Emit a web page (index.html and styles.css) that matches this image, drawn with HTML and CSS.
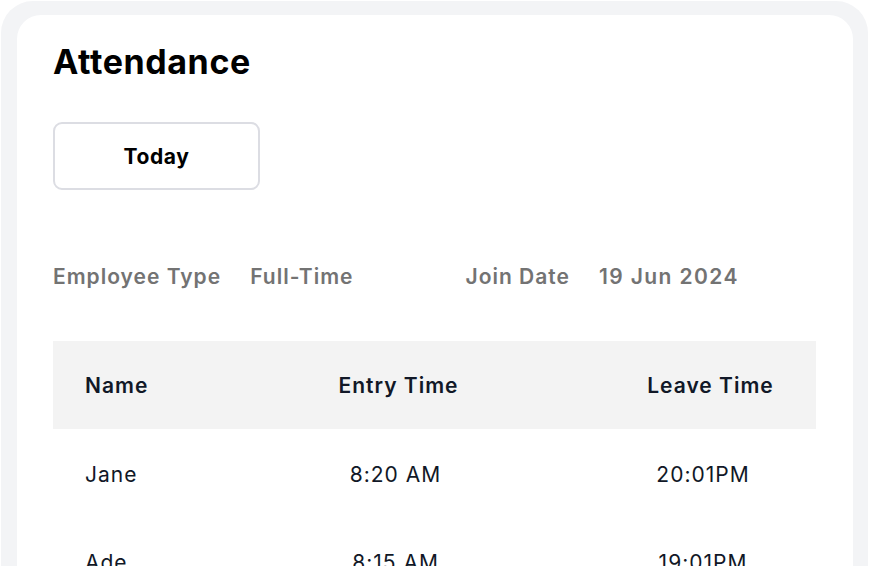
FILE: index.html
```html
<!DOCTYPE html>
<html>
<head>
<meta charset="utf-8">
<link rel="stylesheet" href="styles.css">
</head>
<body>
<div class="frame">
  <div class="card">
    <h1 class="title">Attendance</h1>
    <button class="tab">Today</button>
    <div class="info">
      <span class="label">Employee Type</span>
      <span class="value value-type">Full-Time</span>
      <span class="label">Join Date</span>
      <span class="value value-date">19 Jun 2024</span>
    </div>
    <div class="table">
      <div class="row head">
        <div class="cell c1">Name</div>
        <div class="cell c2">Entry Time</div>
        <div class="cell c3">Leave Time</div>
      </div>
      <div class="row">
        <div class="cell c1">Jane</div>
        <div class="cell c2">8:20 AM</div>
        <div class="cell c3">20:01PM</div>
      </div>
      <div class="row">
        <div class="cell c1">Ade</div>
        <div class="cell c2">8:15 AM</div>
        <div class="cell c3">19:01PM</div>
      </div>
    </div>
  </div>
</div>
</body>
</html>
```

FILE: styles.css
```css
* { box-sizing: border-box; }
html, body { margin: 0; padding: 0; background: #ffffff; }
body {
  padding: 1px 1px 0 1px;
  font-family: Inter, "Noto Sans", sans-serif;
  color: #000;
  height: 566px;
  overflow: hidden;
}
.frame {
  background: #f3f4f6;
  border-radius: 32px;
  padding: 14px 15px 16px 16px;
  height: 700px;
}
.card {
  background: #ffffff;
  border-radius: 24px;
  padding: 27px 36px 40px 36px;
  height: 100%;
}
.title {
  margin: 0;
  font-size: 34px;
  font-weight: 700;
  line-height: 40px;
  letter-spacing: 0.6px;
}
.tab {
  display: block;
  margin-top: 40px;
  width: 207px;
  height: 68px;
  background: #fff;
  border: 2px solid #dcdde3;
  border-radius: 9px;
  font-family: Inter, sans-serif;
  font-size: 21px;
  font-weight: 700;
  letter-spacing: 0.6px;
  color: #000;
}
.info {
  display: flex;
  align-items: baseline;
  margin-top: 75px;
  font-size: 21px;
  font-weight: 600;
  letter-spacing: 1px;
  color: #737373;
  line-height: 24px;
}
.label { margin-right: 29px; }
.value-type { margin-right: 112px; }
.value-date { letter-spacing: 1.4px; }
.table {
  margin-top: 52px;
  width: 763px;
}
.row {
  display: grid;
  grid-template-columns: 110px 468px 185px;
  height: 88px;
  align-items: center;
  font-size: 21px;
  letter-spacing: 1px;
  color: #111827;
  padding-top: 2px;
}
.row.head {
  background: #f3f3f3;
  font-weight: 600;
  color: #111827;
  padding-top: 0;
}
.cell.c1 { padding-left: 32px; }
.cell.c2 { text-align: center; padding-right: 3px; }
.cell.c3 { text-align: center; padding-right: 41px; }
.head .cell.c2 { padding-right: 0; padding-left: 3px; }
.head .cell.c3 { padding-right: 26px; }
```
